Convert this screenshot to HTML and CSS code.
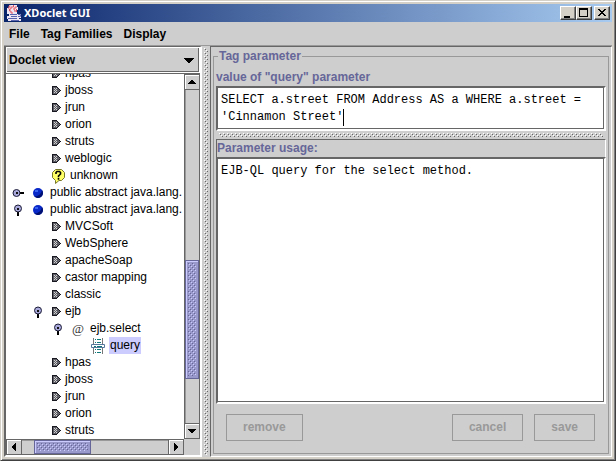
FILE: index.html
```html
<!DOCTYPE html>
<html lang="en">
<head>
<meta charset="utf-8">
<title>XDoclet GUI</title>
<link rel="stylesheet" href="styles.css">
</head>
<body>
<svg class="symbols" aria-hidden="true">
  <symbol id="tag" viewBox="0 0 11 11">
    <path d="M2 1h5v1h1v1h1v1h1v1h1v1h-1v1h-1v1h-1v1h-1v1H2z" fill="#181820"/>
    <path d="M3 2h4v1h1v1h1v1h1v1H9v1H8v1H7v1H3z" fill="#5c5c64"/>
    <path d="M4 3h1v1H4zM6 3h1v1H6zM5 4h1v1H5zM4 5h1v1H4zM6 5h1v1H6zM5 6h1v1H5zM4 7h1v1H4zM6 7h1v1H6z" fill="#d0d0d0"/>
  </symbol>
  <symbol id="closed" viewBox="0 0 12 12">
    <path d="M8 5h4v2H8z" fill="#000"/>
    <circle cx="4.500" cy="6" r="3.500" fill="#a9a9dc" stroke="#1c1c38"/>
    <path d="M4 5h2v2H4z" fill="#111"/>
  </symbol>
  <symbol id="open" viewBox="0 0 12 12">
    <path d="M5 8h2v4H5z" fill="#000"/>
    <circle cx="6" cy="4.500" r="3.500" fill="#a9a9dc" stroke="#1c1c38"/>
    <path d="M5 4h2v2H5z" fill="#111"/>
  </symbol>
  <symbol id="method" viewBox="0 0 16 16">
    <circle cx="8" cy="8" r="5" fill="#0828c8"/>
    <path d="M12 5a5 5 0 0 1-8 6c3 1 7-1 8-6z" fill="#001070"/>
    <path d="M5 5h3v2H5z" fill="#3a62f0"/>
  </symbol>
  <symbol id="question" viewBox="0 0 16 16">
    <path d="M5.500 1.500h6l3 3v5l-3 3H9l-3.500 3v-3l-3-3v-5z" fill="#ffff66" stroke="#77772a"/>
    <path d="M6 6V4.500L7 3.500h2.500l1 1v1.500L8.500 8v1.200M8.500 10v1.700" fill="none" stroke="#000" stroke-width="1.600"/>
  </symbol>
  <symbol id="param" viewBox="0 0 16 16">
    <path d="M3 0h1v16H3zM12 0h1v16h-1z" fill="#777"/>
    <path d="M5 1h1v1H5zM7 1h4v1H7zM5 4h1v1H5zM7 4h4v1H7zM5 11h1v1H5zM7 11h4v1H7zM5 14h1v1H5zM7 14h4v1H7z" fill="#107878"/>
    <path d="M1.500 6.500h13v3h-13z" fill="#fff" stroke="#55789a"/>
    <path d="M4 8h2v1H4zM7 8h5v1H7z" fill="#107878"/>
  </symbol>
</svg>

<div class="window">
  <header class="titlebar">
    <svg class="logo" viewBox="0 0 16 16" aria-hidden="true">
      <path d="M3 0h8v2h1v3h-1v4h4v4h-2v1h2v2H2v-2H1v-3h2V9H1V3h2z" fill="#eee6f2"/>
      <path d="M7.500 0v2H5v2H3.500v2h1.500v2h2M10 1v2H8v2h1v2M4.500 1H3v2H2M10.500 4v3" fill="none" stroke="#e45460"/>
      <path d="M4 9.500h7M5 11.500h6M2 13.500h9M5 15.500h8M12 9.500h2.500v2H12" fill="none" stroke="#5a64ae"/>
    </svg>
    <h1 class="title">XDoclet GUI</h1>
    <button class="winbtn" aria-label="Minimize"><svg viewBox="0 0 12 10"><path d="M2 8h6v2H2z"/></svg></button>
    <button class="winbtn" aria-label="Maximize"><svg viewBox="0 0 12 10"><path d="M1 0h9v9H1zM2 2v6h7V2z" fill-rule="evenodd"/></svg></button>
    <button class="winbtn close" aria-label="Close"><svg viewBox="0 0 12 10"><path d="M2 1h2v1h1v1h2V2h1V1h2v1H9v1H8v1H7v1h1v1h1v1h1v1H8V7H7V6H5v1H4v1H2V7h1V6h1V5h1V4H4V3H3V2H2z"/></svg></button>
  </header>

  <nav class="menubar">
    <button>File</button>
    <button>Tag Families</button>
    <button>Display</button>
  </nav>

  <main class="split">
    <section class="sidebar">
      <div class="combo">
        <select aria-label="View"><option>Doclet view</option></select>
        <svg class="combo-arrow" viewBox="0 0 10 5" aria-hidden="true"><path d="M0 0h10v1H9v1H8v1H7v1H6v1H4V4H3V3H2V2H1V1H0z"/></svg>
      </div>
      <div class="browser">
        <div class="viewport">
          <ul class="tree">
            <li>
              <ul>
                <li><div class="row"><svg class="tag"><use href="#tag"/></svg><span>hpas</span></div></li>
                <li><div class="row"><svg class="tag"><use href="#tag"/></svg><span>jboss</span></div></li>
                <li><div class="row"><svg class="tag"><use href="#tag"/></svg><span>jrun</span></div></li>
                <li><div class="row"><svg class="tag"><use href="#tag"/></svg><span>orion</span></div></li>
                <li><div class="row"><svg class="tag"><use href="#tag"/></svg><span>struts</span></div></li>
                <li><div class="row"><svg class="tag"><use href="#tag"/></svg><span>weblogic</span></div></li>
                <li><div class="row"><svg class="icon"><use href="#question"/></svg><span>unknown</span></div></li>
              </ul>
            </li>
            <li><div class="row"><button class="handle" aria-label="Expand"><svg><use href="#closed"/></svg></button><svg class="icon"><use href="#method"/></svg><span>public abstract java.lang.</span></div></li>
            <li>
              <div class="row"><button class="handle" aria-label="Collapse"><svg><use href="#open"/></svg></button><svg class="icon"><use href="#method"/></svg><span>public abstract java.lang.</span></div>
              <ul>
                <li><div class="row"><svg class="tag"><use href="#tag"/></svg><span>MVCSoft</span></div></li>
                <li><div class="row"><svg class="tag"><use href="#tag"/></svg><span>WebSphere</span></div></li>
                <li><div class="row"><svg class="tag"><use href="#tag"/></svg><span>apacheSoap</span></div></li>
                <li><div class="row"><svg class="tag"><use href="#tag"/></svg><span>castor mapping</span></div></li>
                <li><div class="row"><svg class="tag"><use href="#tag"/></svg><span>classic</span></div></li>
                <li>
                  <div class="row"><button class="handle" aria-label="Collapse"><svg><use href="#open"/></svg></button><svg class="tag"><use href="#tag"/></svg><span>ejb</span></div>
                  <ul>
                    <li>
                      <div class="row"><button class="handle" aria-label="Collapse"><svg><use href="#open"/></svg></button><span class="icon at">@</span><span>ejb.select</span></div>
                      <ul>
                        <li><div class="row"><svg class="icon"><use href="#param"/></svg><span class="selected">query</span></div></li>
                      </ul>
                    </li>
                  </ul>
                </li>
                <li><div class="row"><svg class="tag"><use href="#tag"/></svg><span>hpas</span></div></li>
                <li><div class="row"><svg class="tag"><use href="#tag"/></svg><span>jboss</span></div></li>
                <li><div class="row"><svg class="tag"><use href="#tag"/></svg><span>jrun</span></div></li>
                <li><div class="row"><svg class="tag"><use href="#tag"/></svg><span>orion</span></div></li>
                <li><div class="row"><svg class="tag"><use href="#tag"/></svg><span>struts</span></div></li>
              </ul>
            </li>
          </ul>
        </div>
        <div class="scroll vertical">
          <button aria-label="Scroll up"><svg viewBox="0 0 8 8"><path d="M3 2h2v1h1v1h1v1h1v1H0V5h1V4h1V3h1z"/></svg></button>
          <div class="track"><i class="v-before"></i><i class="thumb v-thumb"></i><i class="v-after"></i></div>
          <button aria-label="Scroll down"><svg viewBox="0 0 8 8"><path d="M0 2h8v1H7v1H6v1H5v1H3V5H2V4H1V3H0z"/></svg></button>
        </div>
        <div class="scroll horizontal">
          <button aria-label="Scroll left"><svg viewBox="0 0 8 8"><path d="M5 0h1v8H5V7H4V6H3V5H2V3h1V2h1V1h1z"/></svg></button>
          <div class="track"><i class="h-before"></i><i class="thumb h-thumb"></i><i class="h-after"></i></div>
          <button aria-label="Scroll right"><svg viewBox="0 0 8 8"><path d="M2 0h1v1h1v1h1v1h1v2H5v1H4v1H3v1H2z"/></svg></button>
        </div>
        <div class="corner"></div>
      </div>
    </section>

    <div class="divider"><i class="bumps"></i></div>

    <section class="detail">
      <fieldset>
        <legend>Tag parameter</legend>
        <label class="caption" for="value">value of "query" parameter</label>
        <div class="sunken value">
          <textarea id="value" spellcheck="false">SELECT a.street FROM Address AS a WHERE a.street = 'Cinnamon Street'</textarea>
          <i class="caret"></i>
        </div>
        <div class="divider flat"><i class="bumps"></i></div>
        <div class="usage">
          <label class="caption" for="usage">Parameter usage:</label>
          <div class="sunken">
            <textarea id="usage" readonly spellcheck="false">EJB-QL query for the select method.</textarea>
          </div>
        </div>
        <div class="actions">
          <button disabled>remove</button>
          <span class="spring"></span>
          <button disabled>cancel</button>
          <button disabled>save</button>
        </div>
      </fieldset>
    </section>
  </main>
</div>
</body>
</html>
```
FILE: styles.css
```css
:root {
  --face: #cecece;
  --frame: #d4d0c8;
  --shadow: #999;
  --dark: #666;
  --accent: #9999cc;
  --accent-dark: #666699;
}

* { box-sizing: border-box; }

body {
  margin: 0;
  font: 12px/17px "Liberation Sans", Arial, sans-serif;
  color: #000;
}

button, select, textarea { font: inherit; color: inherit; border-radius: 0; }
svg { display: block; flex: none; }
ul { list-style: none; margin: 0; padding: 0; }
.symbols { position: absolute; width: 0; height: 0; }

.window {
  display: flex;
  flex-direction: column;
  height: 100vh;
  padding: 3px;
  background: var(--frame);
  border: 1px solid var(--frame);
  border-right-color: #404040;
  border-bottom-color: #404040;
  box-shadow: inset 1px 1px #fff, inset -1px -1px #808080;
}

/* Title bar */
.titlebar {
  display: flex;
  align-items: center;
  height: 18px;
  padding: 0 2px;
  background: linear-gradient(to right, #0a246a, #a6caf0);
}
.logo { width: 16px; height: 16px; }
.title {
  flex: 1;
  margin: 0 2px;
  color: #fff;
  font: bold 11px/18px "Noto Sans", sans-serif;
}
.winbtn {
  width: 16px;
  height: 14px;
  padding: 0 0 0 1px;
  background: var(--frame);
  border: 1px solid #fff;
  border-right-color: #404040;
  border-bottom-color: #404040;
  box-shadow: inset -1px -1px #808080;
}
.winbtn svg { width: 12px; height: 10px; }
.winbtn.close { margin-left: 2px; }

/* Menu bar */
.menubar {
  display: flex;
  gap: 11px;
  height: 24px;
  padding: 0 5px;
  background: var(--face);
  border-bottom: 1px solid var(--shadow);
}
.menubar button {
  padding: 2px 0 0;
  background: none;
  border: 0;
  font-weight: bold;
}

.split {
  flex: 1;
  min-height: 0;
  display: grid;
  grid-template-columns: 198px 8px 1fr;
  background: var(--face);
}

.bumps {
  display: block;
  flex: 1;
  background:
    conic-gradient(from 270deg at 1px 1px, #fff 90deg, transparent 0) 0 0 / 4px 4px,
    conic-gradient(from 270deg at 1px 1px, #666 90deg, transparent 0) 1px 1px / 4px 4px,
    conic-gradient(from 270deg at 1px 1px, #fff 90deg, transparent 0) 2px 2px / 4px 4px,
    conic-gradient(from 270deg at 1px 1px, #666 90deg, transparent 0) 3px 3px / 4px 4px;
}
.divider { display: flex; padding: 2px; }
.divider.flat { height: 8px; padding: 2px 3px; }

/* Tree side */
.sidebar {
  display: flex;
  flex-direction: column;
  min-height: 0;
  border: 1px solid var(--dark);
  border-left-width: 2px;
  border-right: 2px solid #fff;
  border-bottom: 2px solid #fff;
}
.combo {
  position: relative;
  height: 26px;
  border: 1px solid #fff;
  box-shadow: inset -1px -1px var(--dark);
}
.combo select {
  width: 100%;
  height: 100%;
  padding: 0 20px 0 2px;
  appearance: none;
  background: none;
  border: 0;
  font-weight: bold;
}
.combo-arrow {
  position: absolute;
  right: 5px;
  top: 10px;
  width: 10px;
  height: 5px;
  pointer-events: none;
}
.browser {
  flex: 1;
  min-height: 0;
  display: grid;
  grid-template: minmax(0, 1fr) 16px / minmax(0, 1fr) 16px;
  border-top: 1px solid var(--dark);
}
.viewport { background: #fff; overflow: hidden; }

/* The list is scrolled half a row past its first visible item. */
.tree { margin-top: -9px; padding-left: 2px; }
.tree ul { padding-left: 20px; }
.row {
  position: relative;
  display: flex;
  align-items: center;
  gap: 4px;
  height: 17px;
  padding-left: 22px;
  white-space: nowrap;
}
.icon { width: 16px; height: 16px; flex: none; }
.tag { width: 11px; height: 11px; }
.at {
  color: #333;
  text-align: center;
  font: 13px/15px "Liberation Serif", serif;
}
.handle {
  position: absolute;
  left: 4px;
  top: 3px;
  padding: 0;
  background: none;
  border: 0;
}
.handle svg { width: 12px; height: 12px; }
.selected {
  margin: 0 -1px;
  padding: 0 1px;
  background: #ccccff;
}

/* Scroll bars */
.scroll { display: flex; background: var(--face); }
.scroll button {
  display: grid;
  place-items: center;
  width: 16px;
  height: 16px;
  flex: none;
  padding: 0;
  background: var(--face);
  border: 1px solid var(--dark);
  box-shadow: inset 1px 1px #fff;
}
.scroll svg { width: 8px; height: 8px; }
.vertical { flex-direction: column; }
.track { flex: 1; display: flex; }
.vertical .track { flex-direction: column; border: solid var(--dark); border-width: 0 1px; box-shadow: inset 1px 0 var(--shadow); }
.horizontal .track { border: solid var(--dark); border-width: 1px 0; box-shadow: inset 0 1px var(--shadow); }
.thumb {
  background:
    conic-gradient(from 270deg at 1px 1px, #ccccff 90deg, transparent 0) 3px 3px / 4px 4px content-box,
    conic-gradient(from 270deg at 1px 1px, #666699 90deg, transparent 0) 4px 4px / 4px 4px content-box,
    conic-gradient(from 270deg at 1px 1px, #ccccff 90deg, transparent 0) 5px 5px / 4px 4px content-box,
    conic-gradient(from 270deg at 1px 1px, #666699 90deg, transparent 0) 6px 6px / 4px 4px content-box,
    var(--accent);
  padding: 2px;
  border: 1px solid var(--accent-dark);
  box-shadow: inset 1px 1px #ccccff;
}
.v-before { flex: 170; }
.v-thumb { flex: 113; }
.v-after { flex: 44; }
.h-before { flex: 12; }
.h-thumb { flex: 51; }
.h-after { flex: 78; }
.corner { background: var(--face); }

/* Parameter side */
.detail {
  display: flex;
  min-width: 0;
  padding: 1px 2px 2px;
  border: 1px solid var(--dark);
  border-right-color: #fff;
  border-bottom-color: #fff;
}
fieldset {
  flex: 1;
  display: flex;
  flex-direction: column;
  min-width: 0;
  margin: 0;
  padding: 4px 2px 12px;
  border: 1px solid var(--shadow);
}
legend {
  margin-left: 2px;
  padding: 0 1px;
  color: var(--accent-dark);
  font-weight: bold;
}
.caption { display: block; color: var(--accent-dark); font-weight: bold; }
.sunken {
  position: relative;
  display: flex;
  background: #fff;
  border: 2px solid var(--dark);
  border-right-color: #fff;
  border-bottom-color: #fff;
  box-shadow: inset -1px -1px var(--dark);
}
.sunken textarea {
  flex: 1;
  min-width: 0;
  padding: 4px 3px;
  background: none;
  border: 0;
  outline: 0;
  resize: none;
  overflow: hidden;
  font: 12px/17px "Liberation Mono", "Courier New", monospace;
}
.value { height: 45px; }
.caret {
  position: absolute;
  left: calc(3px + 17ch);
  top: 21px;
  width: 1px;
  height: 17px;
  background: #000;
  font: 12px/17px "Liberation Mono", "Courier New", monospace;
}
.usage {
  flex: 1;
  min-height: 0;
  display: flex;
  flex-direction: column;
  border: 1px solid var(--dark);
  border-right-color: #fff;
  border-bottom: 0;
}
.usage .sunken { flex: 1; margin: 0 -1px; }
.actions {
  display: flex;
  gap: 11px;
  margin-top: 10px;
  padding: 0 11px 0 10px;
}
.spring { flex: 1; }
.actions .spring { margin-left: -11px; }
.actions button {
  height: 27px;
  padding: 0 16px;
  background: none;
  border: 1px solid var(--shadow);
  color: var(--shadow);
  font-weight: bold;
}
```
